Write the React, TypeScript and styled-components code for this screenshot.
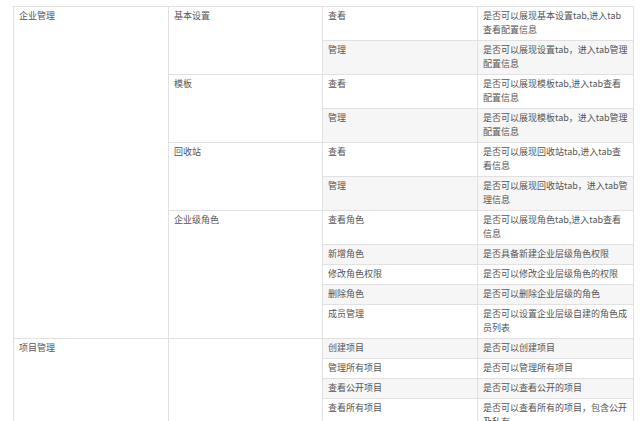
import React from 'react'
import styled, { createGlobalStyle } from 'styled-components'

const GlobalStyle = createGlobalStyle`
  body {
    margin: 0;
    background: #fff;
    font-family: "Noto Sans CJK SC", "Liberation Sans", sans-serif;
  }
`

const Wrap = styled.div`
  padding: 6px 7px 0 13px;
`

const Table = styled.table`
  width: 620px;
  border-collapse: collapse;
  table-layout: fixed;
  font-size: 9px;
  line-height: 14px;
  color: #555;

  tr:nth-child(2n) {
    background: #f6f6f6;
  }
`

const Col = styled.col<{ $w: number }>`
  width: ${({ $w }) => $w}px;
`

const Cell = styled.td<{ $span?: boolean }>`
  border: 1px solid #e1e1e1;
  padding: 2px 5px 3px;
  vertical-align: top;
  ${({ $span }) => ($span ? 'background: #fff;' : '')}
`

type Row = { a?: [string, number]; b?: [string, number]; c: string; d: string }

const rows: Row[] = [
  { a: ['企业管理', 11], b: ['基本设置', 2], c: '查看', d: '是否可以展现基本设置tab,进入tab查看配置信息' },
  { c: '管理', d: '是否可以展现设置tab，进入tab管理配置信息' },
  { b: ['模板', 2], c: '查看', d: '是否可以展现模板tab,进入tab查看配置信息' },
  { c: '管理', d: '是否可以展现模板tab，进入tab管理配置信息' },
  { b: ['回收站', 2], c: '查看', d: '是否可以展现回收站tab,进入tab查看信息' },
  { c: '管理', d: '是否可以展现回收站tab，进入tab管理信息' },
  { b: ['企业级角色', 5], c: '查看角色', d: '是否可以展现角色tab,进入tab查看信息' },
  { c: '新增角色', d: '是否具备新建企业层级角色权限' },
  { c: '修改角色权限', d: '是否可以修改企业层级角色的权限' },
  { c: '删除角色', d: '是否可以删除企业层级的角色' },
  { c: '成员管理', d: '是否可以设置企业层级自建的角色成员列表' },
  { a: ['项目管理', 4], b: ['', 4], c: '创建项目', d: '是否可以创建项目' },
  { c: '管理所有项目', d: '是否可以管理所有项目' },
  { c: '查看公开项目', d: '是否可以查看公开的项目' },
  { c: '查看所有项目', d: '是否可以查看所有的项目，包含公开及私有' },
]

export default function App() {
  return (
    <Wrap>
      <GlobalStyle />
      <Table>
        <colgroup>
          <Col $w={155} />
          <Col $w={154} />
          <Col $w={155} />
          <Col $w={156} />
        </colgroup>
        <tbody>
          {rows.map((r, i) => (
            <tr key={i}>
              {r.a && (
                <Cell rowSpan={r.a[1]} $span>
                  {r.a[0]}
                </Cell>
              )}
              {r.b && (
                <Cell rowSpan={r.b[1]} $span>
                  {r.b[0]}
                </Cell>
              )}
              <Cell>{r.c}</Cell>
              <Cell>{r.d}</Cell>
            </tr>
          ))}
        </tbody>
      </Table>
    </Wrap>
  )
}
